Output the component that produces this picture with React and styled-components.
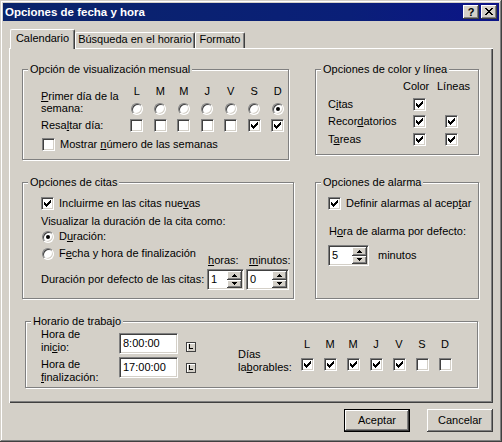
import React from "react";
import styled, { createGlobalStyle } from "styled-components";

const GlobalStyle = createGlobalStyle`
  html, body {
    margin: 0;
    padding: 0;
    background: #d4d0c8;
  }
  body {
    font-family: "Liberation Sans", Arial, sans-serif;
    font-size: 11px;
    color: #000;
  }
`;

const Window = styled.div`
  width: 502px;
  height: 442px;
  box-sizing: border-box;
  padding: 3px;
  background: #d4d0c8;
  box-shadow: inset -1px -1px #404040, inset 1px 1px #d4d0c8,
    inset -2px -2px #808080, inset 2px 2px #fff;
  display: flex;
  flex-direction: column;
`;

const TitleBar = styled.div`
  height: 18px;
  display: flex;
  align-items: center;
  justify-content: space-between;
  background: linear-gradient(to right, #0a246a, #0a1f78 70%, #0c1488);
`;

const TitleText = styled.span`
  padding-left: 2px;
  color: #fff;
  font-weight: bold;
  font-size: 11.5px;
  line-height: 18px;
`;

const CaptionButtons = styled.div`
  display: flex;
  gap: 2px;
  margin-right: 2px;
`;

const CaptionButton = styled.div`
  width: 16px;
  height: 14px;
  box-sizing: border-box;
  background: #d4d0c8;
  box-shadow: inset -1px -1px #404040, inset 1px 1px #fff,
    inset -2px -2px #808080;
  display: flex;
  align-items: center;
  justify-content: center;
  font-weight: bold;
  font-size: 11px;
  line-height: 14px;
  padding-bottom: 1px;
`;

const Body = styled.div`
  flex: 1;
  display: flex;
  flex-direction: column;
  padding: 8px 6px 0;
`;

const TabRow = styled.div`
  height: 19px;
  display: flex;
  align-items: flex-end;
  padding-left: 1px;
  position: relative;
  z-index: 1;
`;

const Tab = styled.div`
  width: ${(p) => p.$w}px;
  height: ${(p) => (p.$active ? 20 : 16)}px;
  margin-bottom: ${(p) => (p.$active ? -1 : 0)}px;
  padding-top: ${(p) => (p.$active ? 2 : 0)}px;
  box-sizing: border-box;
  background: #d4d0c8;
  border-top: 1px solid #fff;
  border-left: 1px solid #fff;
  border-right: 1px solid #404040;
  border-radius: 2px 2px 0 0;
  box-shadow: inset -1px 0 #808080;
  text-align: center;
  line-height: 13px;
  white-space: nowrap;
`;

const Panel = styled.div`
  height: 355px;
  box-sizing: border-box;
  border-top: 1px solid #fff;
  border-left: 1px solid #fff;
  box-shadow: inset -1px -1px #404040, inset -2px -2px #808080;
  padding: 20px 0 0 12px;
  display: grid;
  grid-template-columns: 272px 164px;
  grid-template-rows: 91px 117px 67px;
  column-gap: 21px;
  row-gap: 22px;
  align-items: start;
`;

const Group = styled.div`
  position: relative;
  box-sizing: border-box;
  width: ${(p) => p.$w}px;
  height: ${(p) => p.$h}px;
  margin-left: ${(p) => p.$ml || 0}px;
  grid-column: ${(p) => p.$span || "auto"};
  border: 1px solid #808080;
  box-shadow: 1px 1px #fff, inset 1px 1px #fff;
  padding: ${(p) => p.$pad};
`;

const Legend = styled.span`
  position: absolute;
  top: -7px;
  left: 5px;
  padding: 0 2px;
  background: #d4d0c8;
  line-height: 13px;
  white-space: nowrap;
`;

const Key = styled.span`
  text-decoration: underline;
  text-underline-offset: 1px;
`;

const Text = styled.div`
  line-height: 13px;
  white-space: nowrap;
  margin-top: ${(p) => p.$mt || 0}px;
  margin-left: ${(p) => p.$ml || 0}px;
  margin-bottom: ${(p) => p.$mb || 0}px;
`;

const CheckBox = styled.span`
  flex: none;
  width: 13px;
  height: 13px;
  box-sizing: border-box;
  background: #fff;
  border: 1px solid;
  border-color: #808080 #fff #fff #808080;
  box-shadow: inset 1px 1px #404040, inset -1px -1px #d4d0c8;
  display: flex;
  align-items: center;
  justify-content: center;
  svg {
    display: block;
  }
`;

const RadioBox = styled.span`
  flex: none;
  width: 12px;
  height: 12px;
  box-sizing: border-box;
  border-radius: 50%;
  background: #fff;
  border: 1px solid;
  border-color: #808080 #fff #fff #808080;
  box-shadow: inset 1px 1px #404040, inset -1px -1px #d4d0c8;
  display: flex;
  align-items: center;
  justify-content: center;
  margin-left: ${(p) => p.$ml || 0}px;
  &::after {
    content: "";
    width: 4px;
    height: 4px;
    border-radius: 50%;
    background: ${(p) => (p.$on ? "#000" : "transparent")};
  }
`;

const CheckMark = () => (
  <svg width="7" height="7" viewBox="0 0 7 7" shapeRendering="crispEdges">
    <path
      d="M6 0h1v1H6zM5 1h2v1H5zM0 2h1v1H0zM4 2h3v1H4zM0 3h2v1H0zM3 3h3v1H3zM0 4h5v1H0zM1 5h3v1H1zM2 6h1v1H2z"
      fill="#000"
    />
  </svg>
);

const Check = ({ on }) => <CheckBox>{on && <CheckMark />}</CheckBox>;

const OptionRow = styled.div`
  display: flex;
  align-items: center;
  gap: 5px;
  height: 13px;
  line-height: 13px;
  white-space: nowrap;
  margin-top: ${(p) => p.$mt || 0}px;
  margin-left: ${(p) => p.$ml || 0}px;
`;

const DayGrid = styled.div`
  display: grid;
  grid-template-columns: ${(p) => p.$label}px repeat(7, ${(p) => p.$pitch}px);
  grid-template-rows: ${(p) => p.$rows};
  margin-top: ${(p) => p.$mt || 0}px;
  margin-left: ${(p) => p.$ml || 0}px;
  justify-items: center;
  align-items: center;
`;

const DayLabel = styled.div`
  justify-self: start;
  align-self: ${(p) => (p.$span ? "start" : "center")};
  grid-row: ${(p) => (p.$span ? "1 / span 2" : "auto")};
  grid-column: 1;
  padding-top: ${(p) => p.$pt || 0}px;
  line-height: ${(p) => p.$lh || 13}px;
  white-space: nowrap;
`;

const DayLetter = styled.div`
  line-height: 13px;
  align-self: ${(p) => p.$align || "center"};
`;

const Cell = styled.div`
  display: flex;
  align-self: ${(p) => p.$align || "center"};
`;

const ColorGrid = styled.div`
  display: grid;
  grid-template-columns: 75px 34px 40px;
  grid-template-rows: 15.25px repeat(3, 17.5px);
  align-items: center;
`;

const ColHead = styled.div`
  align-self: start;
  line-height: 13px;
`;

const ColCheck = styled.div`
  display: flex;
  padding-left: ${(p) => p.$indent}px;
`;

const BottomRow = styled.div`
  display: flex;
  align-items: flex-end;
  margin-top: 4px;
`;

const LeftCol = styled.div`
  width: ${(p) => p.$w}px;
  display: flex;
  flex-direction: column;
`;

const SpinCol = styled.div`
  display: flex;
  flex-direction: column;
  margin-left: ${(p) => p.$ml || 0}px;
`;

const Spin = styled.div`
  width: ${(p) => p.$w}px;
  height: 21px;
  box-sizing: border-box;
  background: #fff;
  border: 1px solid;
  border-color: #808080 #fff #fff #808080;
  box-shadow: inset 1px 1px #404040, inset -1px -1px #d4d0c8;
  padding: 1px;
  display: flex;
`;

const SpinValue = styled.div`
  flex: 1;
  padding-left: 2px;
  line-height: 17px;
`;

const SpinButtons = styled.div`
  width: 15px;
  display: flex;
  flex-direction: column;
`;

const SpinButton = styled.div`
  flex: 1;
  background: #d4d0c8;
  box-shadow: inset -1px -1px #404040, inset 1px 1px #fff,
    inset -2px -2px #808080;
  display: flex;
  align-items: center;
  justify-content: center;
  svg {
    display: block;
  }
`;

const Arrow = ({ up }) => (
  <svg width="5" height="3" viewBox="0 0 5 3" shapeRendering="crispEdges">
    <path
      d={up ? "M2 0h1v1H2zM1 1h3v1H1zM0 2h5v1H0z" : "M0 0h5v1H0zM1 1h3v1H1zM2 2h1v1H2z"}
      fill="#000"
    />
  </svg>
);

const SpinBox = ({ value, w }) => (
  <Spin $w={w}>
    <SpinValue>{value}</SpinValue>
    <SpinButtons>
      <SpinButton>
        <Arrow up />
      </SpinButton>
      <SpinButton>
        <Arrow />
      </SpinButton>
    </SpinButtons>
  </Spin>
);

const SpinRow = styled.div`
  display: flex;
  align-items: center;
  margin-top: 7px;
`;

const WorkRow = styled.div`
  display: flex;
  align-items: flex-start;
`;

const Column = styled.div`
  width: ${(p) => (p.$w ? `${p.$w}px` : "auto")};
  display: flex;
  flex-direction: column;
  gap: ${(p) => p.$gap || 0}px;
  margin-top: ${(p) => p.$mt || 0}px;
  margin-left: ${(p) => p.$ml || 0}px;
`;

const TimeField = styled.div`
  width: 59px;
  height: 21px;
  box-sizing: border-box;
  background: #fff;
  border: 1px solid;
  border-color: #808080 #fff #fff #808080;
  box-shadow: inset 1px 1px #404040, inset -1px -1px #d4d0c8;
  padding-left: 3px;
  line-height: 19px;
  margin-top: ${(p) => p.$mt || 0}px;
`;

const ClockIcon = () => (
  <svg width="10" height="10" viewBox="0 0 10 10" shapeRendering="crispEdges">
    <rect x="0" y="0" width="10" height="10" fill="#d4d0c8" />
    <path d="M0 0h10v1H0zM0 0h1v10H0zM9 0h1v10H9zM0 9h10v1H0z" fill="#404040" />
    <path d="M1 1h8v1H1zM1 1h1v8H1z" fill="#fff" />
    <path d="M3 2h1v5H3zM3 6h4v1H3z" fill="#000" />
  </svg>
);

const ButtonRow = styled.div`
  display: flex;
  justify-content: flex-end;
  gap: 17px;
  margin-top: 6px;
`;

const Button = styled.div`
  width: 66px;
  height: 23px;
  box-sizing: border-box;
  background: #d4d0c8;
  border: ${(p) => (p.$default ? "1px solid #000" : "none")};
  box-shadow: inset -1px -1px #404040, inset 1px 1px #fff,
    inset -2px -2px #808080;
  display: flex;
  align-items: center;
  justify-content: center;
  line-height: 13px;
`;

const CloseGlyph = () => (
  <svg width="8" height="7" viewBox="0 0 8 7" shapeRendering="crispEdges">
    <path
      d="M0 0h2v1H0zM6 0h2v1H6zM1 1h2v1H1zM5 1h2v1H5zM2 2h4v1H2zM3 3h2v1H3zM2 4h4v1H2zM1 5h2v1H1zM5 5h2v1H5zM0 6h2v1H0zM6 6h2v1H6z"
      fill="#000"
    />
  </svg>
);

const days = ["L", "M", "M", "J", "V", "S", "D"];
const highlight = [false, false, false, false, false, true, true];
const workDays = [true, true, true, true, true, false, false];

export default function App() {
  return (
    <>
      <GlobalStyle />
      <Window>
        <TitleBar>
          <TitleText>Opciones de fecha y hora</TitleText>
          <CaptionButtons>
            <CaptionButton>?</CaptionButton>
            <CaptionButton>
              <CloseGlyph />
            </CaptionButton>
          </CaptionButtons>
        </TitleBar>
        <Body>
          <TabRow>
            <Tab $active $w={65}>
              Calendario
            </Tab>
            <Tab $w={120}>Búsqueda en el horario</Tab>
            <Tab $w={50}>Formato</Tab>
          </TabRow>
          <Panel>
            <Group $w={267} $h={91} $pad="15px 0 0 18px">
              <Legend>Opción de visualización mensual</Legend>
              <DayGrid $label={84} $pitch={23.5} $rows="13px 21px 13px">
                <DayLabel $span $pt={5} $lh={12}>
                  <Key>P</Key>rimer día de la
                  <br />
                  semana:
                </DayLabel>
                {days.map((d, i) => (
                  <DayLetter key={"l" + i} style={{ gridColumn: i + 2, gridRow: 1 }}>
                    {d}
                  </DayLetter>
                ))}
                {days.map((d, i) => (
                  <Cell key={"r" + i} style={{ gridColumn: i + 2, gridRow: 2 }}>
                    <RadioBox $on={i === 6} />
                  </Cell>
                ))}
                <DayLabel style={{ gridRow: 3 }}>
                  Resa<Key>l</Key>tar día:
                </DayLabel>
                {highlight.map((on, i) => (
                  <Cell key={"c" + i} style={{ gridColumn: i + 2, gridRow: 3 }}>
                    <Check on={on} />
                  </Cell>
                ))}
              </DayGrid>
              <OptionRow $mt={6} $ml={1}>
                <Check />
                <span>
                  Mostrar <Key>n</Key>úmero de las semanas
                </span>
              </OptionRow>
            </Group>

            <Group $w={164} $h={86} $pad="10px 0 0 12px">
              <Legend>Opciones de color y línea</Legend>
              <ColorGrid>
                <div />
                <ColHead>Color</ColHead>
                <ColHead>Líneas</ColHead>
                <Text>
                  C<Key>i</Key>tas
                </Text>
                <ColCheck $indent={10}>
                  <Check on />
                </ColCheck>
                <div />
                <Text>
                  Recor<Key>d</Key>atorios
                </Text>
                <ColCheck $indent={10}>
                  <Check on />
                </ColCheck>
                <ColCheck $indent={8}>
                  <Check on />
                </ColCheck>
                <Text>
                  T<Key>a</Key>reas
                </Text>
                <ColCheck $indent={10}>
                  <Check on />
                </ColCheck>
                <ColCheck $indent={8}>
                  <Check on />
                </ColCheck>
              </ColorGrid>
            </Group>

            <Group $w={272} $h={117} $pad="14px 0 0 18px">
              <Legend>Opciones de citas</Legend>
              <OptionRow>
                <Check on />
                <span>
                  Incluirme en las citas nue<Key>v</Key>as
                </span>
              </OptionRow>
              <Text $mt={5}>Visualizar la duración de la cita como:</Text>
              <OptionRow $mt={2}>
                <RadioBox $on $ml={1} />
                <span>
                  D<Key>u</Key>ración:
                </span>
              </OptionRow>
              <BottomRow>
                <LeftCol $w={166}>
                  <OptionRow>
                    <RadioBox $ml={1} />
                    <span>
                      F<Key>e</Key>cha y hora de finalización
                    </span>
                  </OptionRow>
                  <Text $mt={13} $mb={4}>
                    Duración por defecto de las citas:
                  </Text>
                </LeftCol>
                <SpinCol>
                  <Text $ml={1} $mb={2}>
                    <Key>h</Key>oras:
                  </Text>
                  <SpinBox value="1" w={37} />
                </SpinCol>
                <SpinCol $ml={2}>
                  <Text $ml={3} $mb={2}>
                    <Key>m</Key>inutos:
                  </Text>
                  <SpinBox value="0" w={43} />
                </SpinCol>
              </BottomRow>
            </Group>

            <Group $w={164} $h={117} $pad="14px 0 0 12px">
              <Legend>Opciones de alarma</Legend>
              <OptionRow>
                <Check on />
                <span>
                  Definir alarmas al acep<Key>t</Key>ar
                </span>
              </OptionRow>
              <Text $mt={15} $ml={1}>
                H<Key>o</Key>ra de alarma por defecto:
              </Text>
              <SpinRow>
                <SpinBox value="5" w={41} />
                <Text $ml={9}>minutos</Text>
              </SpinRow>
            </Group>

            <Group $w={453} $h={67} $ml={3} $span="1 / span 2" $pad="0 0 0 15px">
              <Legend>Horario de trabajo</Legend>
              <WorkRow>
                <Column $w={78} $mt={6} $gap={4}>
                  <Text>
                    Hora de
                    <br />
                    ini<Key>c</Key>io:
                  </Text>
                  <Text>
                    Hora de
                    <br />
                    <Key>f</Key>inalización:
                  </Text>
                </Column>
                <Column>
                  <TimeField $mt={11}>8:00:00</TimeField>
                  <TimeField $mt={3}>17:00:00</TimeField>
                </Column>
                <Column $ml={8} $mt={20} $gap={11}>
                  <ClockIcon />
                  <ClockIcon />
                </Column>
                <DayGrid $label={57.5} $pitch={23} $rows="13px 20px" $mt={16} $ml={42}>
                  <DayLabel $span $pt={10}>
                    Días
                    <br />
                    la<Key>b</Key>orables:
                  </DayLabel>
                  {days.map((d, i) => (
                    <DayLetter key={"w" + i} style={{ gridColumn: i + 2, gridRow: 1 }}>
                      {d}
                    </DayLetter>
                  ))}
                  {workDays.map((on, i) => (
                    <Cell key={"k" + i} $align="end" style={{ gridColumn: i + 2, gridRow: 2 }}>
                      <Check on={on} />
                    </Cell>
                  ))}
                </DayGrid>
              </WorkRow>
            </Group>
          </Panel>
          <ButtonRow>
            <Button $default>Aceptar</Button>
            <Button>Cancelar</Button>
          </ButtonRow>
        </Body>
      </Window>
    </>
  );
}
